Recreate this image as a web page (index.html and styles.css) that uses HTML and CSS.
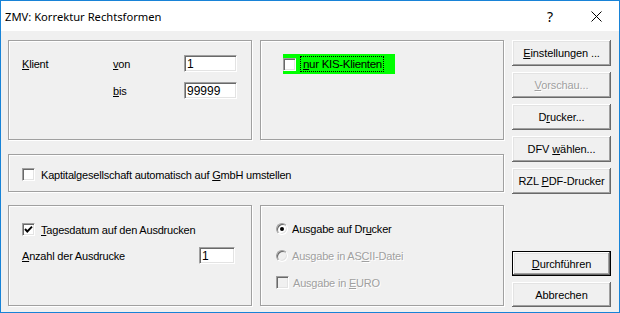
FILE: index.html
```html
<!DOCTYPE html>
<html lang="de">
<head>
    <meta charset="UTF-8">
    <title>ZMV: Korrektur Rechtsformen</title>
    <link rel="stylesheet" href="styles.css">
</head>
<body>

<div class="window">
    <div class="titlebar">
        <span class="title">ZMV: Korrektur Rechtsformen</span>
        <span class="tb-btn help">?</span>
        <span class="tb-btn close">
            <svg width="11" height="11" viewBox="0 0 11 11">
                <path d="M0.5 0.5 L10.5 10.5 M10.5 0.5 L0.5 10.5" stroke="#000" stroke-width="1" fill="none"/>
            </svg>
        </span>
    </div>

    <div class="client">
        <div class="main">

            <!-- Klient von / bis -->
            <div class="group range">
                <span class="label"><u>K</u>lient</span>
                <span class="label"><u>v</u>on</span>
                <input class="field" type="text" value="1">
                <span></span>
                <span class="label"><u>b</u>is</span>
                <input class="field" type="text" value="99999">
            </div>

            <!-- KIS -->
            <div class="group kis-box">
                <div class="kis">
                    <span class="check"></span>
                    <span class="focus"><u>n</u>ur KIS-Klienten</span>
                </div>
            </div>

            <!-- GmbH -->
            <div class="group wide">
                <div class="row">
                    <span class="check"></span>
                    <span class="label">Kaptitalgesellschaft automatisch auf <u>G</u>mbH umstellen</span>
                </div>
            </div>

            <!-- Tagesdatum / Anzahl -->
            <div class="group print">
                <div class="row">
                    <span class="check">
                        <svg width="11" height="11" viewBox="0 0 11 11">
                            <path d="M2 5 L4.3 7.5 L9 2.6" stroke="#000" stroke-width="1.9" fill="none"/>
                        </svg>
                    </span>
                    <span class="label"><u>T</u>agesdatum auf den Ausdrucken</span>
                </div>
                <div class="count">
                    <span class="label"><u>A</u>nzahl der Ausdrucke</span>
                    <input class="field" type="text" value="1">
                </div>
            </div>

            <!-- Ausgabe -->
            <div class="group output">
                <div class="row">
                    <span class="radio on"></span>
                    <span class="label">Ausgabe auf Dr<u>u</u>cker</span>
                </div>
                <div class="row">
                    <span class="radio disabled"></span>
                    <span class="label off">Ausgabe in AS<u>C</u>II-Datei</span>
                </div>
                <div class="row">
                    <span class="check disabled"></span>
                    <span class="label off">Ausgabe in <u>E</u>URO</span>
                </div>
            </div>

        </div>

        <div class="buttons">
            <button class="button"><u>E</u>instellungen ...</button>
            <button class="button off"><u>V</u>orschau...</button>
            <button class="button">D<u>r</u>ucker...</button>
            <button class="button">DFV <u>w</u>ählen...</button>
            <button class="button">RZL <u>P</u>DF-Drucker</button>
            <button class="button default run"><u>D</u>urchführen</button>
            <button class="button">Abbrechen</button>
        </div>
    </div>
</div>

</body>
</html>
```

FILE: styles.css
```css
body {
    margin: 0;
    font-family: 'Liberation Sans', Arial, sans-serif;
    font-size: 11px;
    color: #000;
}

.window {
    width: 620px;
    height: 313px;
    box-sizing: border-box;
    border: 1px solid #1883d7;
    background-color: #f0f0f0;
}

.titlebar {
    height: 30px;
    background-color: #fff;
    display: flex;
    align-items: center;
}

.title {
    flex: 1;
    padding-left: 4px;
    font-family: 'Noto Sans', sans-serif;
    font-size: 11.2px;
}

.tb-btn {
    width: 46px;
    height: 30px;
    display: flex;
    align-items: center;
    justify-content: center;
}

.help {
    font-family: 'Noto Sans', sans-serif;
    font-size: 14px;
}

.client {
    display: flex;
    gap: 8px;
    padding: 9px 8px 0 7px;
}

.main {
    display: grid;
    grid-template-columns: 244px 244px;
    grid-template-rows: 100px 38px 100px;
    column-gap: 8px;
    row-gap: 14px;
}

.group {
    box-sizing: border-box;
    border: 1px solid #a0a0a0;
    box-shadow: inset 1px 1px 0 #fff, 1px 1px 0 #fff;
}

.label {
    white-space: nowrap;
    letter-spacing: -0.2px;
}

.off {
    color: #a0a0a0;
    text-shadow: 1px 1px 0 #fff;
}

/* inputs */
.field {
    box-sizing: border-box;
    height: 17px;
    margin: 0;
    padding: 0 0 0 2px;
    font-family: 'Liberation Sans', Arial, sans-serif;
    font-size: 12px;
    background-color: #fff;
    border: 1px solid;
    border-color: #a0a0a0 #fff #fff #a0a0a0;
    box-shadow: inset 1px 1px 0 #696969, inset -1px -1px 0 #e3e3e3;
    outline: none;
}

.range {
    display: grid;
    grid-template-columns: 91px 71px 53px;
    grid-template-rows: 17px 17px;
    row-gap: 10px;
    align-items: center;
    align-content: start;
    padding: 14px 0 0 13px;
}

.range .field {
    width: 53px;
}

/* checkbox and radio */
.check {
    box-sizing: border-box;
    width: 13px;
    height: 13px;
    flex: none;
    background-color: #fff;
    border: 1px solid;
    border-color: #a0a0a0 #fff #fff #a0a0a0;
    box-shadow: inset 1px 1px 0 #696969, inset -1px -1px 0 #e3e3e3;
    display: flex;
    align-items: center;
    justify-content: center;
}

.check.disabled {
    background-color: #f0f0f0;
}

.radio {
    box-sizing: border-box;
    width: 12px;
    height: 12px;
    flex: none;
    border-radius: 50%;
    background-color: #fff;
    border: 1px solid;
    border-color: #a0a0a0 #fff #fff #a0a0a0;
    box-shadow: inset 1px 1px 0 #696969, inset -1px -1px 0 #e3e3e3;
    display: flex;
    align-items: center;
    justify-content: center;
}

.radio.on::after {
    content: '';
    width: 4px;
    height: 4px;
    border-radius: 50%;
    background-color: #000;
}

.radio.disabled {
    background-color: #f0f0f0;
}

.row {
    display: flex;
    align-items: center;
    gap: 6px;
    height: 13px;
}

.kis-box {
    padding: 13px 0 0 22px;
}

.kis {
    display: flex;
    align-items: center;
    gap: 4px;
    width: 112px;
    height: 20px;
    background-color: #00ff00;
}

.focus {
    padding: 1px 1px 1px 2px;
    border: 1px dotted #000;
    font-size: 11.5px;
    letter-spacing: -0.3px;
    white-space: nowrap;
}

.wide {
    grid-column: 1 / 3;
    padding: 13px 0 0 13px;
}

.print {
    margin-top: -1px;
    padding: 17px 0 0 13px;
}

.count {
    display: grid;
    grid-template-columns: 177px 36px;
    align-items: center;
    margin-top: 11px;
}

.count .field {
    width: 36px;
}

.output {
    margin-top: -1px;
    display: flex;
    flex-direction: column;
    gap: 14px;
    padding: 16px 0 0 15px;
}

.output .row {
    gap: 4px;
}

/* buttons */
.buttons {
    width: 99px;
    height: 267px;
    display: flex;
    flex-direction: column;
    gap: 6px;
}

.button {
    box-sizing: border-box;
    width: 99px;
    height: 26px;
    margin: 0;
    padding: 0;
    font-family: 'Liberation Sans', Arial, sans-serif;
    font-size: 11px;
    letter-spacing: -0.1px;
    color: #000;
    background-color: #f0f0f0;
    border: none;
    box-shadow: inset -1px -1px 0 #696969, inset 1px 1px 0 #fff, inset -2px -2px 0 #a0a0a0, inset 2px 2px 0 #e3e3e3;
}

.button.off {
    color: #a0a0a0;
    text-shadow: 1px 1px 0 #fff;
}

.button.run {
    margin-top: auto;
    height: 25px;
}

.button.run + .button {
    height: 25px;
}

.button.default {
    border: 1px solid #000;
}
```
